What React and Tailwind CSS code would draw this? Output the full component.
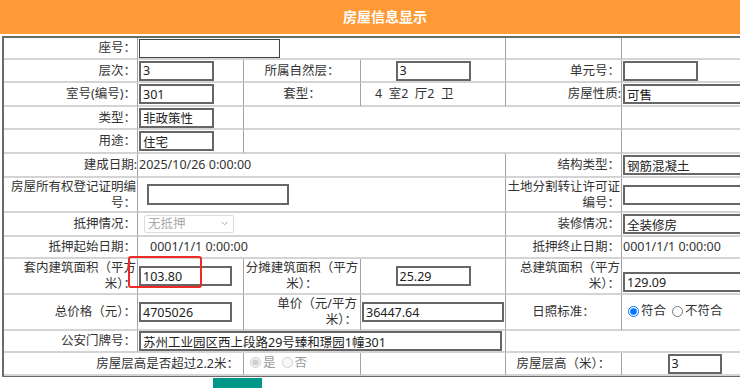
import React from 'react';

const inp = 'h-[20px] border-2 border-[#666] bg-white px-[2px] text-[12.5px] leading-[16px] text-[#222] outline-none align-middle';
const td = 'border-r border-r-[#a3a3a3] border-b-2 border-b-[#d4d4d4] px-[1px] py-0 align-middle';
const lbl = `${td} text-right`;
const mid = `${td} text-center`;

function Radio({ checked, disabled, label }) {
  return (
    <label className={`inline-flex items-center mr-[6px] ${disabled ? 'text-[#999]' : 'text-[#333]'}`}>
      <input type="radio" checked={checked} disabled={disabled} readOnly className="w-[11px] h-[11px] m-0 mr-[2px]" />
      {label}
    </label>
  );
}

export default function App() {
  return (
    <div className="w-[740px] h-[388px] overflow-hidden bg-white">
      <div className="relative w-[770px] text-[12.5px] leading-[16px] text-[#333] font-['Noto_Sans','Noto_Sans_CJK_SC',sans-serif]">
        <div className="h-[34px] bg-[#ff9a36] text-white font-bold text-[14px] leading-[34px] text-center">房屋信息显示</div>

        <table className="mt-[2px] ml-[2px] w-[766px] table-fixed border-separate border-spacing-0 border-t-2 border-l-2 border-b border-[#6a6a6a]">
          <colgroup>
            <col className="w-[134px]" />
            <col className="w-[106px]" />
            <col className="w-[117px]" />
            <col className="w-[145px]" />
            <col className="w-[116px]" />
            <col className="w-[146px]" />
          </colgroup>
          <tbody>
            <tr className="h-[22px]">
              <td className={lbl}>座号：</td>
              <td className={td} colSpan={3}>
                <input className="h-[19px] w-[141px] border border-[#444] px-[2px] outline-none align-middle" defaultValue="" />
              </td>
              <td className={td}></td>
              <td className={td}></td>
            </tr>
            <tr className="h-[23px]">
              <td className={lbl}>层次：</td>
              <td className={td}><input className={`${inp} w-[75px]`} defaultValue="3" /></td>
              <td className={mid}>所属自然层：</td>
              <td className={mid}><input className={`${inp} w-[75px]`} defaultValue="3" /></td>
              <td className={lbl}>单元号：</td>
              <td className={td}><input className={`${inp} w-[75px]`} defaultValue="" /></td>
            </tr>
            <tr className="h-[24px]">
              <td className={lbl}>室号(编号)：</td>
              <td className={td}><input className={`${inp} w-[75px]`} defaultValue="301" /></td>
              <td className={mid}>套型：</td>
              <td className={`${td} pl-[14px] whitespace-pre`}>4  室2  厅2  卫</td>
              <td className={`${td} text-right pr-0`}>房屋性质:</td>
              <td className={td}><input className={`${inp} w-[144px]`} defaultValue="可售" /></td>
            </tr>
            <tr className="h-[23px]">
              <td className={lbl}>类型：</td>
              <td className={td}><input className={`${inp} w-[75px]`} defaultValue="非政策性" /></td>
              <td className={td} colSpan={3}></td>
              <td className={td}></td>
            </tr>
            <tr className="h-[24px]">
              <td className={lbl}>用途：</td>
              <td className={td}><input className={`${inp} w-[75px]`} defaultValue="住宅" /></td>
              <td className={td} colSpan={3}></td>
              <td className={td}></td>
            </tr>
            <tr className="h-[24px]">
              <td className={`${td} text-right pr-0`}>建成日期:</td>
              <td className={td} colSpan={3}>2025/10/26 0:00:00</td>
              <td className={lbl}>结构类型：</td>
              <td className={td}><input className={`${inp} w-[144px]`} defaultValue="钢筋混凝土" /></td>
            </tr>
            <tr className="h-[35px]">
              <td className={lbl}>房屋所有权登记证明编号：</td>
              <td className={td} colSpan={3}>
                <input className={`${inp} ml-[8px] w-[142px] h-[21px]`} defaultValue="" />
              </td>
              <td className={lbl}>土地分割转让许可证编号：</td>
              <td className={td}><input className={`${inp} w-[144px] h-[19px]`} defaultValue="" /></td>
            </tr>
            <tr className="h-[24px]">
              <td className={lbl}>抵押情况：</td>
              <td className={td} colSpan={3}>
                <div className="relative ml-[5px] w-[90px] h-[18px]">
                  <select disabled className="appearance-none w-full h-full border border-[#dcdcdc] rounded-[2px] bg-white pl-[3px] text-[#aaa] outline-none">
                    <option>无抵押</option>
                  </select>
                  <svg className="absolute right-[6px] top-[6px] w-[7px] h-[5px]" viewBox="0 0 7 5" fill="none" stroke="#aaa" strokeWidth="1">
                    <path d="M0.5 0.8 L3.5 3.8 L6.5 0.8" />
                  </svg>
                </div>
              </td>
              <td className={lbl}>装修情况：</td>
              <td className={td}><input className={`${inp} w-[144px]`} defaultValue="全装修房" /></td>
            </tr>
            <tr className="h-[22px]">
              <td className={lbl}>抵押起始日期：</td>
              <td className={`${td} pl-[12px]`} colSpan={3}>0001/1/1 0:00:00</td>
              <td className={lbl}>抵押终止日期：</td>
              <td className={td}>0001/1/1 0:00:00</td>
            </tr>
            <tr className="h-[36px]">
              <td className={lbl}>套内建筑面积（平方米）：</td>
              <td className={td}><input className={`${inp} w-[93px]`} defaultValue="103.80" /></td>
              <td className={mid}>分摊建筑面积（平方米）：</td>
              <td className={mid}><input className={`${inp} w-[75px]`} defaultValue="25.29" /></td>
              <td className={lbl}>总建筑面积（平方米）：</td>
              <td className={`${td} !align-bottom pb-[1px]`}><input className={`${inp} w-[144px] h-[18px]`} defaultValue="129.09" /></td>
            </tr>
            <tr className="h-[36px]">
              <td className={lbl}>总价格（元）：</td>
              <td className={td}><input className={`${inp} w-[93px]`} defaultValue="4705026" /></td>
              <td className={`${lbl} pr-[3px]`}>单价（元/平方<br />米）：</td>
              <td className={td}><input className={`${inp} w-[142px]`} defaultValue="36447.64" /></td>
              <td className={mid}>日照标准：</td>
              <td className={`${td} pl-[6px]`}>
                <Radio checked label="符合" />
                <Radio checked={false} label="不符合" />
              </td>
            </tr>
            <tr className="h-[22px]">
              <td className={lbl}>公安门牌号：</td>
              <td className={td} colSpan={3}>
                <input className={`${inp} w-[363px]`} defaultValue="苏州工业园区西上段路29号臻和璟园1幢301" />
              </td>
              <td className={td} colSpan={2}></td>
            </tr>
            <tr className="h-[23px]">
              <td className={`${lbl} pr-[4px] border-b-0`} colSpan={2}>房屋层高是否超过2.2米：</td>
              <td className={`${td} pl-[6px] border-b-0`}>
                <Radio checked disabled label="是" />
                <Radio checked={false} disabled label="否" />
              </td>
              <td className={`${td} border-b-0`}></td>
              <td className={`${mid} border-b-0`}>房屋层高（米）：</td>
              <td className={`${mid} border-b-0`}><input className={`${inp} w-[54px]`} defaultValue="3" /></td>
            </tr>
          </tbody>
        </table>

        <div className="pl-[213px] pt-[1px]">
          <button type="button" aria-label="保存" className="w-[49px] h-[36px] bg-[#009688]" />
        </div>

        <div className="absolute left-[128px] top-[256px] w-[74px] h-[32px] border-2 border-[#ee2a24] rounded-[3px] pointer-events-none" />
      </div>
    </div>
  );
}
